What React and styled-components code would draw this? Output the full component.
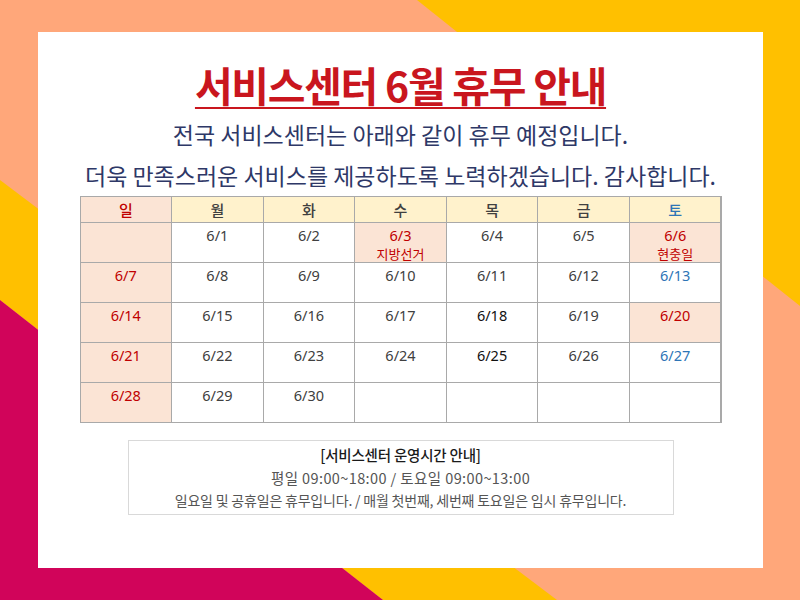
import React from "react";
import styled, { createGlobalStyle } from "styled-components";

const GlobalStyle = createGlobalStyle`
  html, body { margin: 0; padding: 0; }
  body {
    width: 800px;
    height: 600px;
    overflow: hidden;
    font-family: "Noto Sans CJK KR", "Noto Sans", sans-serif;
  }
`;

const Page = styled.div`
  position: relative;
  width: 800px;
  height: 600px;
  box-sizing: border-box;
  padding: 32px 37px 32px 38px;
  background: #ffa77a;
`;

const Backdrop = styled.svg`
  position: absolute;
  inset: 0;
  z-index: 0;
`;

const Card = styled.main`
  position: relative;
  z-index: 1;
  height: 536px;
  background: #ffffff;
  box-sizing: border-box;
  padding-top: 28px;
  display: flex;
  flex-direction: column;
  align-items: center;
`;

const Title = styled.h1`
  margin: 0;
  font-size: 41px;
  line-height: 48px;
  font-weight: 700;
  letter-spacing: -1.3px;
  color: #c9161e;
  text-decoration: underline;
  text-decoration-thickness: 2px;
  text-underline-offset: 5px;
`;

const Lead = styled.p`
  margin: 6px 0 0;
  font-size: 23px;
  line-height: 41px;
  font-weight: 400;
  color: #2e3867;
  text-align: center;
`;

const Calendar = styled.div`
  display: grid;
  grid-template-columns: repeat(7, 1fr);
  grid-template-rows: 25px repeat(5, 39px);
  gap: 1px;
  padding: 1px;
  width: 642px;
  box-sizing: border-box;
  background: #a9a9a9;
`;

const toneColor = {
  sun: "#c00000",
  sat: "#2e75b6",
  plain: "#404040",
  dark: "#111111",
};

const HeadCell = styled.div`
  display: flex;
  align-items: center;
  justify-content: center;
  background: ${(p) => (p.$tone === "sun" ? "#fbe4d5" : "#fff2cc")};
  color: ${(p) => toneColor[p.$tone]};
  font-size: 15px;
  font-weight: 500;
`;

const DayCell = styled.div`
  display: flex;
  flex-direction: column;
  align-items: center;
  padding-top: 3px;
  background: ${(p) => (p.$off ? "#fbe4d5" : "#ffffff")};
  color: ${(p) => toneColor[p.$tone]};
  font-family: "Noto Sans", "Noto Sans CJK KR", sans-serif;
  font-size: 14.5px;
  line-height: 18px;
  font-weight: 400;
`;

const Note = styled.span`
  font-family: "Noto Sans CJK KR", sans-serif;
  font-size: 13px;
  line-height: 20px;
`;

const InfoBox = styled.section`
  margin-top: 17px;
  width: 546px;
  box-sizing: border-box;
  border: 1px solid #d9d9d9;
  padding: 2px 0;
  text-align: center;
`;

const lineStyle = {
  head: { size: "14.5px", spacing: "-0.2px", weight: 500, color: "#1a1a1a" },
  time: { size: "14.5px", spacing: "0.4px", weight: 400, color: "#555555" },
  rule: { size: "14px", spacing: "-0.2px", weight: 400, color: "#555555" },
};

const InfoLine = styled.div`
  font-size: ${(p) => lineStyle[p.$kind].size};
  line-height: 23px;
  letter-spacing: ${(p) => lineStyle[p.$kind].spacing};
  font-weight: ${(p) => lineStyle[p.$kind].weight};
  color: ${(p) => lineStyle[p.$kind].color};
`;

const heads = [
  ["일", "sun"],
  ["월", "plain"],
  ["화", "plain"],
  ["수", "plain"],
  ["목", "plain"],
  ["금", "plain"],
  ["토", "sat"],
];

const weeks = [
  [
    { d: "", off: true },
    { d: "6/1" },
    { d: "6/2" },
    { d: "6/3", note: "지방선거", off: true, tone: "sun" },
    { d: "6/4" },
    { d: "6/5" },
    { d: "6/6", note: "현충일", off: true, tone: "sun" },
  ],
  [
    { d: "6/7", off: true, tone: "sun" },
    { d: "6/8" },
    { d: "6/9" },
    { d: "6/10" },
    { d: "6/11" },
    { d: "6/12" },
    { d: "6/13", tone: "sat" },
  ],
  [
    { d: "6/14", off: true, tone: "sun" },
    { d: "6/15" },
    { d: "6/16" },
    { d: "6/17" },
    { d: "6/18", tone: "dark" },
    { d: "6/19" },
    { d: "6/20", off: true, tone: "sun" },
  ],
  [
    { d: "6/21", off: true, tone: "sun" },
    { d: "6/22" },
    { d: "6/23" },
    { d: "6/24" },
    { d: "6/25", tone: "dark" },
    { d: "6/26" },
    { d: "6/27", tone: "sat" },
  ],
  [
    { d: "6/28", off: true, tone: "sun" },
    { d: "6/29" },
    { d: "6/30" },
    { d: "" },
    { d: "" },
    { d: "" },
    { d: "" },
  ],
];

export default function App() {
  return (
    <>
      <GlobalStyle />
      <Page>
        <Backdrop width="800" height="600" viewBox="0 0 800 600" aria-hidden="true">
          <polygon points="417,0 800,0 800,306" fill="#ffc000" />
          <polygon points="0,180 557,600 383,600 0,300" fill="#ffc000" />
          <polygon points="0,300 383,600 0,600" fill="#d1045a" />
        </Backdrop>
        <Card>
          <Title>서비스센터 6월 휴무 안내</Title>
          <Lead>
            전국 서비스센터는 아래와 같이 휴무 예정입니다.
            <br />
            더욱 만족스러운 서비스를 제공하도록 노력하겠습니다. 감사합니다.
          </Lead>
          <Calendar>
            {heads.map(([label, tone]) => (
              <HeadCell key={label} $tone={tone}>
                {label}
              </HeadCell>
            ))}
            {weeks.flat().map((c, i) => (
              <DayCell key={i} $off={c.off} $tone={c.tone || "plain"}>
                {c.d}
                {c.note && <Note>{c.note}</Note>}
              </DayCell>
            ))}
          </Calendar>
          <InfoBox>
            <InfoLine $kind="head">[서비스센터 운영시간 안내]</InfoLine>
            <InfoLine $kind="time">평일 09:00~18:00 / 토요일 09:00~13:00</InfoLine>
            <InfoLine $kind="rule">
              일요일 및 공휴일은 휴무입니다. / 매월 첫번째, 세번째 토요일은 임시 휴무입니다.
            </InfoLine>
          </InfoBox>
        </Card>
      </Page>
    </>
  );
}
